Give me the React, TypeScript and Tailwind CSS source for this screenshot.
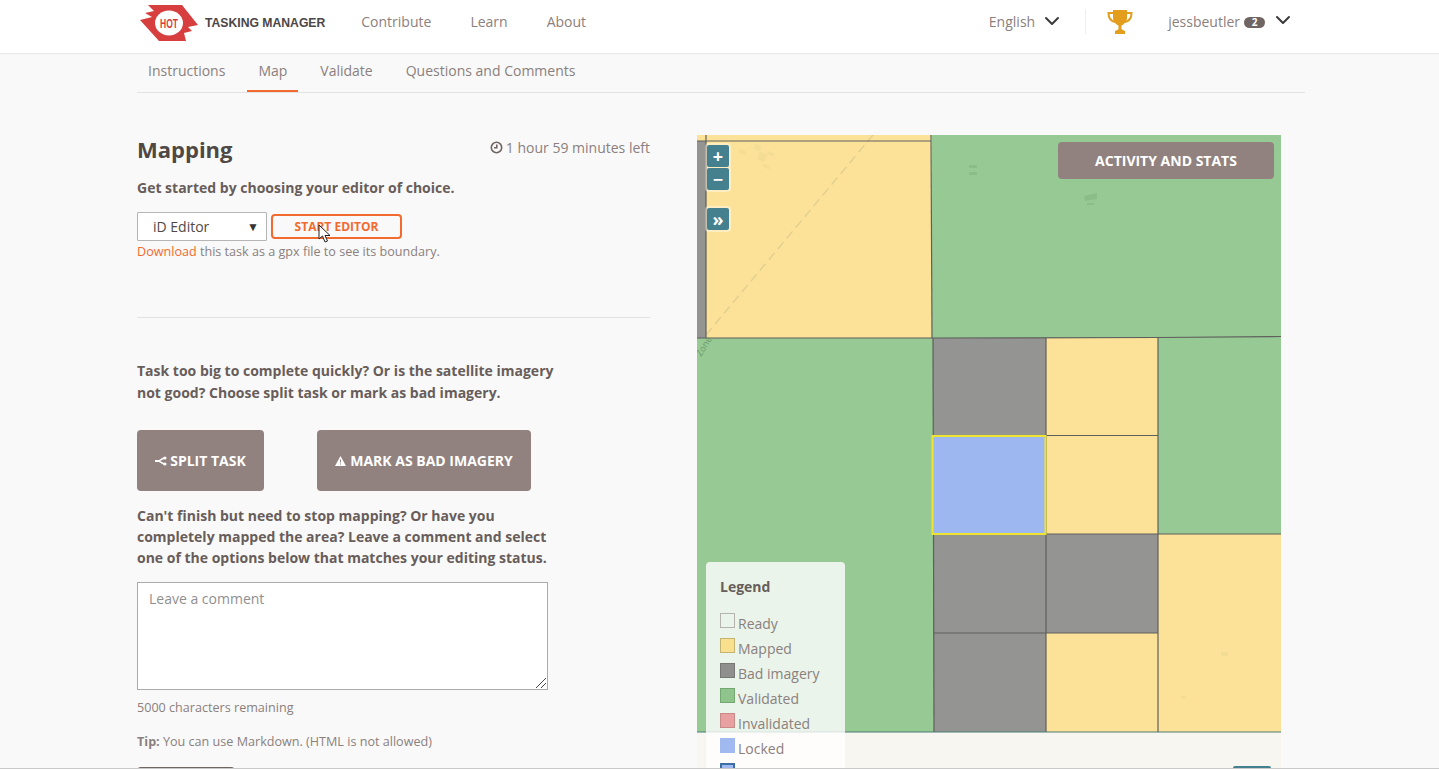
import { ChevronDown } from "lucide-react";

const legend: [string, string, string][] = [
  ["Ready", "bg-transparent", "border-[#b5b5ad]"],
  ["Mapped", "bg-[#f9e08f]", "border-[#c4b472]"],
  ["Bad imagery", "bg-[#8f8f8d]", "border-[#777775]"],
  ["Validated", "bg-[#8fc48c]", "border-[#74a872]"],
  ["Invalidated", "bg-[#e9a0a0]", "border-[#c98a8a]"],
  ["Locked", "bg-[#a0b9f0]", "border-[#a0b9f0]"],
];

function Logo() {
  return (
    <svg width="58" height="36" viewBox="0 0 58 36" className="shrink-0">
      <path d="M8 0H42L58 20L48 22L52 26L44 28L46 36H19L0 15L12 12L5 8L14 6Z" fill="#d73f3f" />
      <ellipse cx="29" cy="18" rx="14" ry="12.500" fill="#fff" />
      <text x="29" y="22.500" textAnchor="middle" fontSize="12" fontWeight="700" fill="#d73f3f" fontFamily="'Liberation Sans',sans-serif" textLength="18" lengthAdjust="spacingAndGlyphs">HOT</text>
    </svg>
  );
}

function TrophyIcon() {
  return (
    <svg width="26" height="24" viewBox="0 0 26 24" className="shrink-0">
      <path d="M6 0H20V8C20 12 16 15 14.500 15.500V19C14.500 20 17 20 18 21V24H8V21C9 20 11.500 20 11.500 19V15.500C10 15 6 12 6 8Z" fill="#e39e1e" />
      <path d="M6 3H1.500C1.500 8 3.500 11 8 12M20 3H24.500C24.500 8 22.500 11 18 12" stroke="#e39e1e" strokeWidth="2" fill="none" />
    </svg>
  );
}

function MapDrawing() {
  const line = "#5f5f5c";
  return (
    <svg width="584" height="634" viewBox="697 135 584 634" className="block">
      <rect x="697" y="135" width="584" height="634" fill="#f7f6f1" />
      <rect x="697" y="135" width="236" height="206" fill="#fce298" />
      <rect x="697" y="141" width="9" height="197" fill="#949492" />
      <rect x="932" y="135" width="349" height="203" fill="#97c994" />
      <rect x="697" y="338" width="237" height="394" fill="#97c994" />
      <rect x="1158" y="337" width="123" height="197" fill="#97c994" />
      <rect x="933" y="338" width="113" height="98" fill="#949492" />
      <rect x="1046" y="338" width="112" height="98" fill="#fce298" />
      <rect x="1046" y="436" width="112" height="98" fill="#fce298" />
      <rect x="933" y="534" width="113" height="99" fill="#949492" />
      <rect x="1046" y="534" width="112" height="99" fill="#949492" />
      <rect x="934" y="633" width="112" height="99" fill="#949492" />
      <rect x="1046" y="633" width="112" height="99" fill="#fce298" />
      <rect x="1158" y="534" width="123" height="198" fill="#fce298" />
      <path d="M706 335L873 135" stroke="#e3cf8f" strokeWidth="1.500" strokeDasharray="9 5" fill="none" />
      <g fill="#f3dc94">
        <rect x="739" y="150" width="7" height="4" transform="rotate(20 742 152)" />
        <rect x="755" y="145" width="6" height="5" transform="rotate(20 758 147)" />
        <rect x="758" y="153" width="8" height="8" transform="rotate(25 762 157)" />
        <rect x="767" y="152" width="7" height="3" transform="rotate(20 770 154)" />
        <rect x="763" y="165" width="7" height="3" transform="rotate(25 766 166)" />
        <rect x="1221" y="652" width="7" height="4" />
        <rect x="1181" y="696" width="5" height="3" />
      </g>
      <g fill="#8abd88">
        <rect x="969" y="165" width="8" height="3" />
        <rect x="969" y="172" width="8" height="3" />
        <path d="M1084 196L1097 193V199L1085 201Z" />
        <rect x="1087" y="203" width="7" height="2" />
      </g>
      <g stroke={line} strokeWidth="1.200" fill="none">
        <path d="M697 141H931" />
        <path d="M706 135V338" />
        <path d="M931 135L932 338" />
        <path d="M697 338H933L1158 337.500L1281 336.500" />
        <path d="M933 338L934 732" />
        <path d="M1046 338V732" />
        <path d="M1158 337V732" />
        <path d="M1046 435.500H1158" />
        <path d="M933 534H1281" />
        <path d="M934 633H1158" />
        <path d="M934 435.500H1046" />
        <path d="M697 732H1281" stroke="#4d7d77" />
      </g>
      <rect x="932.500" y="436" width="113" height="98" fill="#9db8f1" stroke="#f0e52e" strokeWidth="2" />
      <text x="701" y="357" fontSize="9" fill="#6c9c6a" transform="rotate(-58 701 357)" fontFamily="'Open Sans',sans-serif">Zone</text>
    </svg>
  );
}

function MapPanel() {
  const btn = "w-[22px] h-[22px] bg-[#45808f] text-white rounded-[2px] flex items-center justify-center font-bold text-[18px] leading-none";
  return (
    <div className="relative w-[584px] h-[634px] overflow-hidden">
      <MapDrawing />
      <div className="absolute left-[8px] top-[8px] flex flex-col gap-[1px] rounded-[4px] bg-[#ffffff66] p-[2px]">
        <div className={btn}>+</div>
        <div className={btn}>−</div>
      </div>
      <div className="absolute left-[8px] top-[71px] rounded-[4px] bg-[#ffffff66] p-[2px]">
        <div className={btn}>»</div>
      </div>
      <div className="absolute left-[361px] top-[7px] w-[216px] h-[37px] rounded-[4px] bg-[#91827f] text-white font-bold text-[14px] flex items-center justify-center">
        ACTIVITY AND STATS
      </div>
      <div className="absolute left-[9px] top-[427px] w-[139px] h-[207px] rounded-t-[4px] bg-[#ffffffcc] px-[14px] pt-[15px] text-[#8b807d] text-[14px]">
        <div className="font-bold text-[#685d5a] leading-[20px] mb-[16px]">Legend</div>
        <div className="flex flex-col gap-[5px]">
          {legend.map(([name, bg, bd]) => (
            <div key={name} className="flex items-start h-[20px] leading-[20px]">
              <span className={"w-[15px] h-[15px] border mr-[3px] shrink-0 " + bg + " " + bd} />
              <span className="mt-[1px]">{name}</span>
            </div>
          ))}
          <div className="w-[15px] h-[15px] bg-[#a0b9f0] border-2 border-[#3b6fa5]" />
        </div>
      </div>
      <div className="absolute left-[536px] top-[631px] w-[38px] h-[8px] bg-[#45808f] rounded-t-[2px]" />
    </div>
  );
}

export default function App() {
  return (
    <div className="h-[769px] overflow-hidden bg-[#f9f9f9] text-[#8b807d] border-b border-[#c9c9c9] font-['Open_Sans',sans-serif] text-[14px]">
      <header className="h-[54px] bg-white border-b border-[#e8e8e8] pl-[140px] pr-[144px] flex items-center">
        <div className="flex items-center mb-[8px]">
          <Logo />
          <span className="ml-[7px] mt-[1px] text-[#4b4645] font-bold text-[12.2px] font-['Liberation_Sans',sans-serif]">TASKING MANAGER</span>
        </div>
        <nav className="ml-[36px] flex gap-[39px] text-[#8b807d] text-[14px] mb-[11px]">
          <span>Contribute</span>
          <span>Learn</span>
          <span>About</span>
        </nav>
        <div className="ml-auto flex items-center h-[34px] mb-[11px]">
          <span className="text-[14px]">English</span>
          <ChevronDown className="ml-[5px] w-[24px] h-[24px] text-[#3d3a3a]" strokeWidth={2} />
          <div className="w-px h-[25px] bg-[#eeeeee] ml-[21px]" />
          <div className="ml-[21px] mt-[2px]"><TrophyIcon /></div>
          <span className="ml-[35px] text-[14px]">jessbeutler</span>
          <span className="ml-[4px] w-[21px] h-[11px] rounded-full bg-[#6f6562] text-white text-[10px] font-bold flex items-center justify-center mt-[3px]">2</span>
          <ChevronDown className="ml-[6px] mb-[2px] w-[24px] h-[24px] text-[#3d3a3a]" strokeWidth={2} />
        </div>
      </header>

      <div className="ml-[137px] w-[1168px] h-[39px] border-b border-[#e3e3e3] flex pl-[11px] text-[#8b807d] text-[14px]">
        <span className="h-[38px] leading-[34px]">Instructions</span>
        <span className="ml-[22px] px-[11px] h-[38px] leading-[34px] border-b-2 border-[#f26a2e]">Map</span>
        <span className="ml-[11px] px-[11px] h-[38px] leading-[34px]">Validate</span>
        <span className="ml-[11px] px-[11px] h-[38px] leading-[34px]">Questions and Comments</span>
      </div>

      <main className="flex pl-[137px] pt-[42px]">
        <section className="w-[513px] shrink-0 text-[#685d5a]">
          <div className="flex justify-between items-start">
            <h1 className="text-[22px] font-bold text-[#4f4845] leading-[28px]">Mapping</h1>
            <span className="text-[14px] text-[#8b807d] flex items-center gap-[3px] mt-[2px]">
              <svg width="13" height="13" viewBox="0 0 13 13" fill="none" stroke="#6f6562" strokeWidth="1.600">
                <circle cx="6.500" cy="6.500" r="5.200" />
                <path d="M6.800 3.500V6.800H4" />
              </svg>
              1 hour 59 minutes left
            </span>
          </div>
          <p className="font-bold mt-[15px] leading-[20px]">Get started by choosing your editor of choice.</p>
          <div className="flex mt-[14px] items-center">
            <div className="w-[130px] h-[29px] border border-[#b5b5b5] bg-white rounded-[1px] pl-[15px] pr-[7px] flex items-center justify-between text-[#4f4845]">
              <span>iD Editor</span>
              <span className="text-[12px] text-[#333]">▼</span>
            </div>
            <div className="relative ml-[4px] w-[131px] h-[25px] border-2 border-[#f26a2e] rounded-[4px] text-[#f26a2e] font-bold text-[12px] flex items-center justify-center">
              START EDITOR
              <svg className="absolute left-[45px] top-[8px]" width="13" height="20" viewBox="0 0 13 20">
                <path d="M1 1V15L4.500 12L7 18L9.500 17L7 11.500H12Z" fill="#fff" stroke="#222" strokeWidth="1" />
              </svg>
            </div>
          </div>
          <p className="text-[12.6px] mt-[1px] leading-[20px] text-[#8b807d]">
            <span className="text-[#f26a2e]">Download</span> this task as a gpx file to see its boundary.
          </p>
          <hr className="border-t border-[#e3e3e3] mt-[55px]" />
          <p className="font-bold mt-[42px] leading-[22px] w-[440px]">
            Task too big to complete quickly? Or is the satellite imagery not good? Choose split task or mark as bad imagery.
          </p>
          <div className="flex mt-[26px]">
            <div className="w-[127px] h-[61px] rounded-[4px] bg-[#91827f] text-white font-bold flex items-center justify-center gap-[3px]">
              <svg width="12" height="10" viewBox="0 0 12 10" fill="#fff">
                <path d="M0 4H4L9 1V3L5 5L9 7V9L4 6H0Z" />
                <circle cx="10" cy="2" r="1.500" />
                <circle cx="10" cy="8" r="1.500" />
              </svg>
              SPLIT TASK
            </div>
            <div className="ml-[53px] w-[214px] h-[61px] rounded-[4px] bg-[#91827f] text-white font-bold flex items-center justify-center gap-[4px]">
              <svg width="11" height="10" viewBox="0 0 11 10">
                <path d="M5.500 0L11 10H0Z" fill="#fff" />
                <path d="M5.500 3.500V6.500M5.500 7.500V8.500" stroke="#91827f" />
              </svg>
              MARK AS BAD IMAGERY
            </div>
          </div>
          <p className="font-bold mt-[14px] leading-[21px] w-[420px]">
            Can't finish but need to stop mapping? Or have you completely mapped the area? Leave a comment and select one of the options below that matches your editing status.
          </p>
          <div className="relative mt-[14px] w-[411px] h-[108px] border border-[#ababab] bg-white px-[11px] py-[6px] text-[#8f8f8f] leading-[20px]">
            Leave a comment
            <svg className="absolute right-px bottom-px" width="11" height="11" viewBox="0 0 11 11" stroke="#444" strokeWidth="1">
              <path d="M1 11L11 1M6 11L11 6" />
            </svg>
          </div>
          <p className="text-[12.6px] mt-[8px] leading-[20px] text-[#8b807d]">5000 characters remaining</p>
          <p className="text-[12.6px] mt-[14px] leading-[20px] text-[#8b807d]"><b>Tip:</b> You can use Markdown. (HTML is not allowed)</p>
          <div className="mt-[15px] w-[98px] h-[10px] rounded-t-[4px] bg-[#6f6562]" />
        </section>
        <section className="ml-[47px] h-[634px]">
          <MapPanel />
        </section>
      </main>
    </div>
  );
}
